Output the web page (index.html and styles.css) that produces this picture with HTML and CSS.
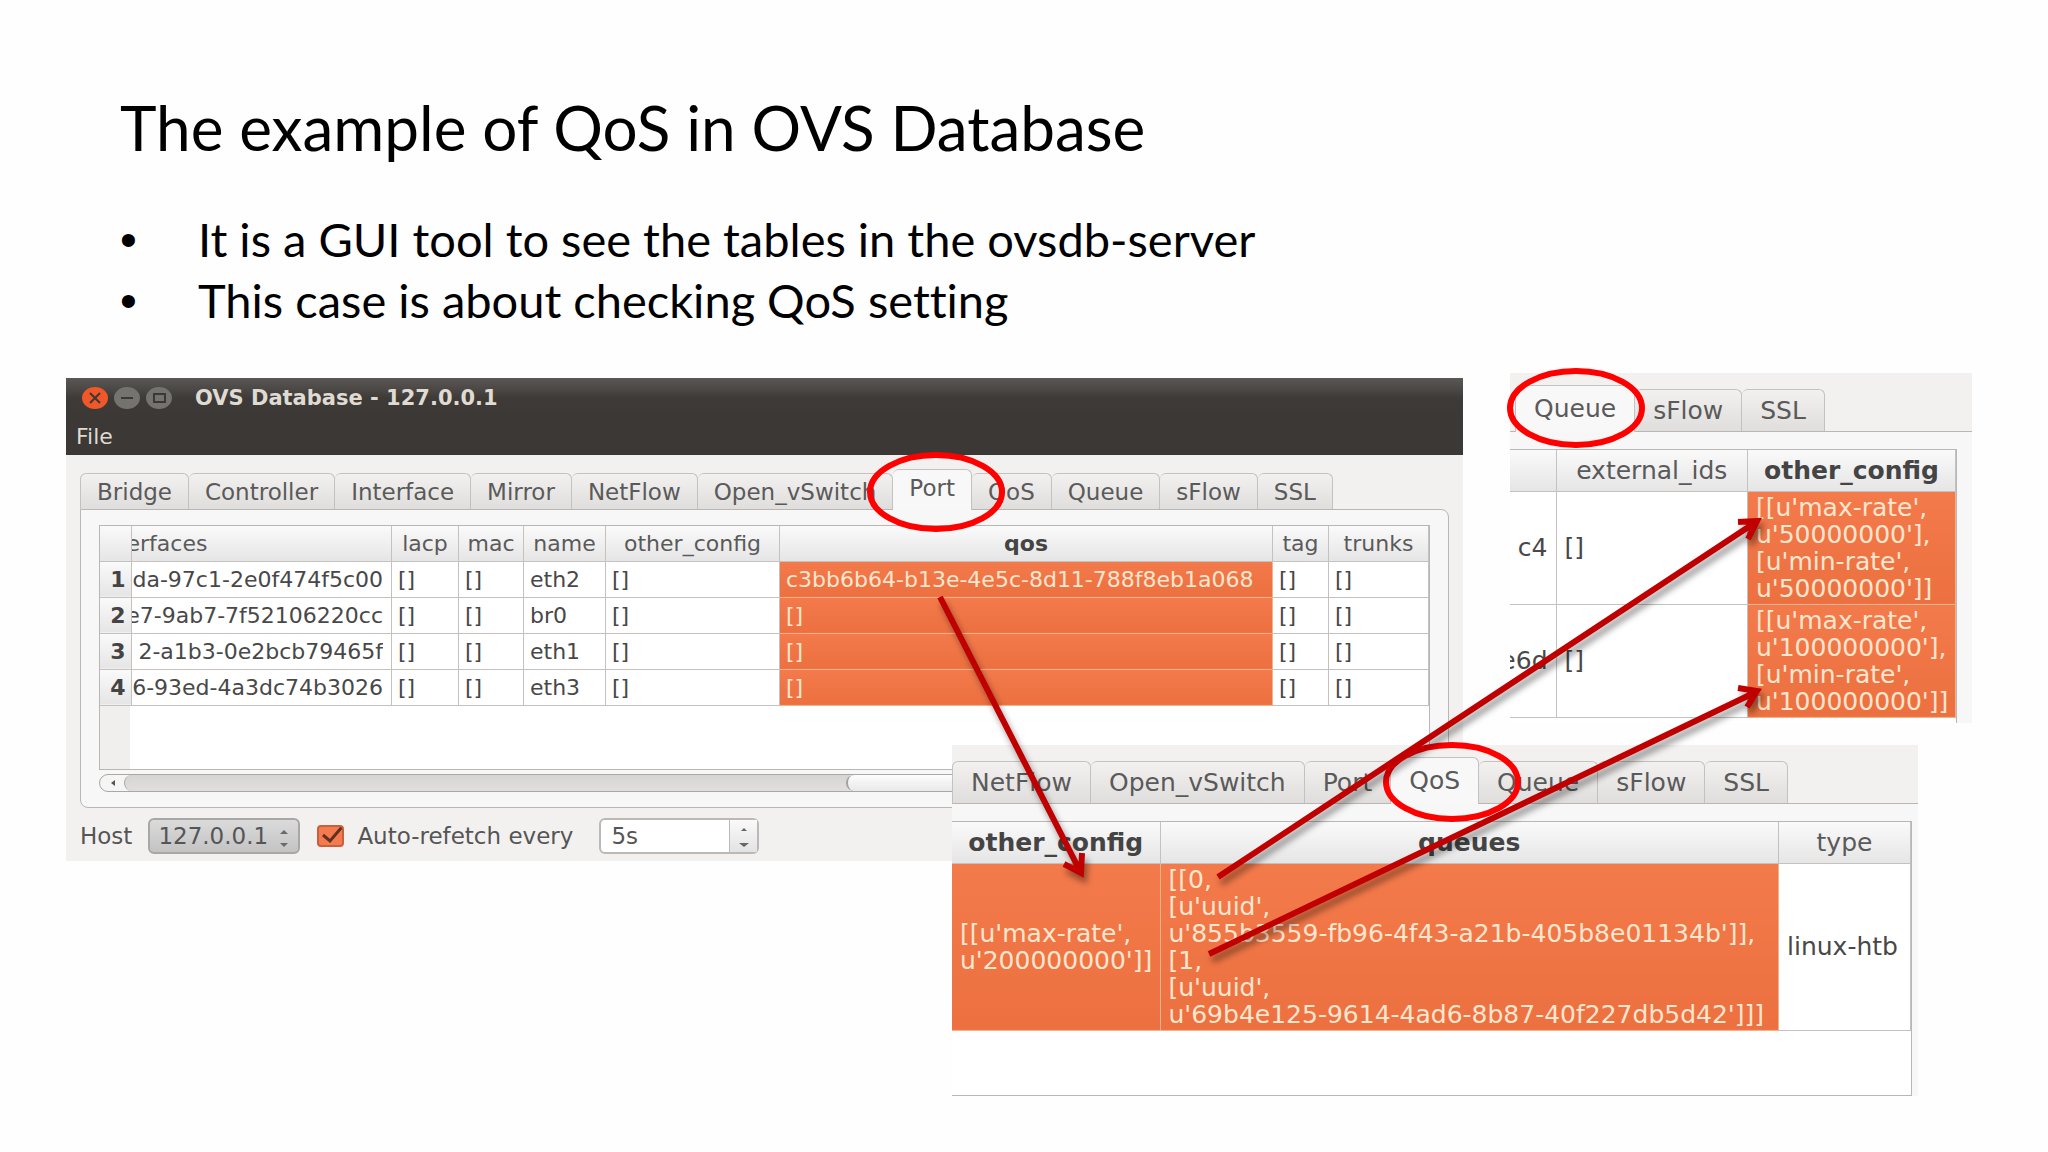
FILE: index.html
```html
<!DOCTYPE html>
<html lang="en">
<head>
    <meta charset="UTF-8">
    <meta name="viewport" content="width=device-width, initial-scale=1.0">
    <title>The example of QoS in OVS Database</title>
    <link rel="stylesheet" href="styles.css">
</head>
<body>

<header class="slide-header">
    <h1>The example of QoS in OVS Database</h1>
    <ul>
        <li>It is a GUI tool to see the tables in the ovsdb-server</li>
        <li>This case is about checking QoS setting</li>
    </ul>
</header>

<main class="canvas">

    <!-- Main window, Port tab -->
    <section class="window port-window">
        <div class="titlebar">
            <button class="dot close" aria-label="Close">
                <svg viewBox="0 0 26 22"><path d="M8 6l10 10M18 6L8 16"/></svg>
            </button>
            <button class="dot" aria-label="Minimize">
                <svg viewBox="0 0 26 22"><path d="M7 11h12"/></svg>
            </button>
            <button class="dot" aria-label="Maximize">
                <svg viewBox="0 0 26 22"><path d="M8 7h11v8H8z"/></svg>
            </button>
            <span class="window-title">OVS Database - 127.0.0.1</span>
        </div>
        <nav class="menubar"><a href="#">File</a></nav>

        <div class="content">
            <div class="tabs">
                <button>Bridge</button>
                <button>Controller</button>
                <button>Interface</button>
                <button>Mirror</button>
                <button>NetFlow</button>
                <button>Open_vSwitch</button>
                <button class="active">Port</button>
                <button>QoS</button>
                <button>Queue</button>
                <button>sFlow</button>
                <button>SSL</button>
            </div>
            <div class="pane">
                <div class="table-area">
                    <table>
                        <colgroup>
                            <col class="col-num"><col><col class="col-lacp"><col class="col-mac"><col class="col-name">
                            <col class="col-other"><col class="col-qos"><col class="col-tag"><col class="col-trunks">
                        </colgroup>
                        <tr>
                            <th></th>
                            <th class="cut-left">erfaces</th>
                            <th>lacp</th>
                            <th>mac</th>
                            <th>name</th>
                            <th>other_config</th>
                            <th class="sorted">qos</th>
                            <th>tag</th>
                            <th>trunks</th>
                        </tr>
                        <tr>
                            <th class="num">1</th>
                            <td class="uuid"><span>da-97c1-2e0f474f5c00</span></td>
                            <td>[]</td><td>[]</td><td>eth2</td><td>[]</td>
                            <td class="selected">c3bb6b64-b13e-4e5c-8d11-788f8eb1a068</td>
                            <td>[]</td><td>[]</td>
                        </tr>
                        <tr>
                            <th class="num">2</th>
                            <td class="uuid"><span>e7-9ab7-7f52106220cc</span></td>
                            <td>[]</td><td>[]</td><td>br0</td><td>[]</td>
                            <td class="selected">[]</td>
                            <td>[]</td><td>[]</td>
                        </tr>
                        <tr>
                            <th class="num">3</th>
                            <td class="uuid"><span>2-a1b3-0e2bcb79465f</span></td>
                            <td>[]</td><td>[]</td><td>eth1</td><td>[]</td>
                            <td class="selected">[]</td>
                            <td>[]</td><td>[]</td>
                        </tr>
                        <tr>
                            <th class="num">4</th>
                            <td class="uuid"><span>6-93ed-4a3dc74b3026</span></td>
                            <td>[]</td><td>[]</td><td>eth3</td><td>[]</td>
                            <td class="selected">[]</td>
                            <td>[]</td><td>[]</td>
                        </tr>
                    </table>
                </div>
                <div class="scrollbar">
                    <svg class="scroll-arrow" viewBox="0 0 24 16"><path d="M15 5v6l-4-3z"/></svg>
                    <div class="groove"></div>
                    <div class="thumb"></div>
                </div>
            </div>
            <form class="footer">
                <label for="host">Host</label>
                <span class="host-box">
                    <select id="host"><option>127.0.0.1</option></select>
                    <svg class="arrows" viewBox="0 0 12 22"><path d="M2 7l4-4 4 4zM2 16l4 4 4-4z"/></svg>
                </span>
                <input type="checkbox" id="refetch" checked>
                <label for="refetch">Auto-refetch every</label>
                <span class="spin-box">
                    <input type="text" aria-label="Refetch interval" value="5s">
                    <span class="spin-buttons">
                        <button type="button" aria-label="Increase"><svg viewBox="0 0 12 6"><path d="M3 5l3-3 3 3z"/></svg></button>
                        <button type="button" aria-label="Decrease"><svg viewBox="0 0 12 6"><path d="M1 1h10L6 5z"/></svg></button>
                    </span>
                </span>
            </form>
        </div>
    </section>

    <!-- Queue tab -->
    <section class="window part queue-window">
        <div class="tabs">
            <button class="active">Queue</button>
            <button>sFlow</button>
            <button>SSL</button>
        </div>
        <div class="table-area">
            <table>
                <colgroup><col class="col-id"><col><col class="col-config"></colgroup>
                <tr>
                    <th></th>
                    <th>external_ids</th>
                    <th class="sorted">other_config</th>
                </tr>
                <tr>
                    <td class="uuid"><span>c4</span></td>
                    <td>[]</td>
                    <td class="selected">[[u'max-rate',<br>u'50000000'],<br>[u'min-rate',<br>u'50000000']]</td>
                </tr>
                <tr>
                    <td class="uuid"><span>e6d</span></td>
                    <td>[]</td>
                    <td class="selected">[[u'max-rate',<br>u'100000000'],<br>[u'min-rate',<br>u'100000000']]</td>
                </tr>
            </table>
        </div>
    </section>

    <!-- QoS tab -->
    <section class="window part qos-window">
        <div class="tabs">
            <button>NetFlow</button>
            <button>Open_vSwitch</button>
            <button>Port</button>
            <button class="active">QoS</button>
            <button>Queue</button>
            <button>sFlow</button>
            <button>SSL</button>
        </div>
        <div class="table-area">
            <table>
                <colgroup><col class="col-config"><col><col class="col-type"></colgroup>
                <tr>
                    <th class="sorted">other_config</th>
                    <th class="sorted">queues</th>
                    <th>type</th>
                </tr>
                <tr>
                    <td class="selected">[[u'max-rate',<br>u'200000000']]</td>
                    <td class="selected">[[0,<br>[u'uuid',<br>u'855b3559-fb96-4f43-a21b-405b8e01134b']],<br>[1,<br>[u'uuid',<br>u'69b4e125-9614-4ad6-8b87-40f227db5d42']]]</td>
                    <td>linux-htb</td>
                </tr>
            </table>
        </div>
    </section>

    <!-- Red circles and arrows over the windows -->
    <svg class="marks" viewBox="0 373 2048 723" preserveAspectRatio="none">
        <g class="circles">
            <ellipse cx="936" cy="492" rx="66" ry="37"/>
            <ellipse cx="1576" cy="408" rx="66" ry="37"/>
            <ellipse cx="1452" cy="782" rx="66" ry="37"/>
        </g>
        <g class="arrow-lines">
            <path d="M940 597L1080 871M1064 864L1081 873L1082 853"/>
            <path d="M1218 877L1756 522M1738 522L1757 521L1748 539"/>
            <path d="M1209 954L1756 692M1738 688L1757 691L1747 707"/>
        </g>
    </svg>
</main>

</body>
</html>
```
FILE: styles.css
```css
body {
    margin: 0;
    background-color: #fefefe;
    font-family: Lato, "Open Sans", sans-serif;
    color: #000;
}
.slide-header {
    padding: 87px 120px 0;
}
h1 {
    margin: 0;
    font-size: 62px;
    font-weight: 400;
    line-height: 80px;
}
ul {
    margin: 42px 0 0;
    padding-left: 78px;
    list-style: none;
    font-size: 47px;
    line-height: 61px;
    font-variant-ligatures: none;
}
li::before {
    content: "•";
    float: left;
    margin-left: -78px;
    font-family: "Liberation Sans", sans-serif;
    font-size: 48px;
}

/* the windows overlap, so they share one grid */
.canvas {
    position: relative;
    display: grid;
    grid-template-columns: 66fr 886fr 511fr 47fr 408fr 54fr 76fr;
    grid-template-rows: 5px 345px 22px 116px 235px;
    margin-top: 42px;
    font-family: "DejaVu Sans", sans-serif;
    font-size: 22px;
    color: #4c4c4c;
}
.window {
    background-color: #f2f1f0;
    min-width: 0;
}
.port-window {
    grid-column: 2 / 4;
    grid-row: 2 / 5;
}
.queue-window {
    grid-column: 5 / 7;
    grid-row: 1 / 3;
}
.qos-window {
    grid-column: 3 / 6;
    grid-row: 4 / 6;
}
.part {
    display: flex;
    flex-direction: column;
    background: linear-gradient(#f2f1f0 59px, #f8f7f7 59px);
    font-size: 25px;
}

button, input, select {
    font: inherit;
    color: inherit;
}

/* title bar */
.titlebar {
    display: flex;
    align-items: center;
    gap: 6px;
    height: 40px;
    padding-left: 16px;
    background: linear-gradient(#5a5855, #3e3a37 50%, #3c3835);
}
.dot {
    width: 26px;
    height: 22px;
    padding: 0;
    border: none;
    border-radius: 50%;
    background-color: #75736d;
}
.dot.close {
    background-color: #f0582a;
}
.dot svg {
    display: block;
    fill: none;
    stroke: #3c3835;
    stroke-width: 2;
}
.window-title {
    margin-left: 17px;
    font-size: 21px;
    font-weight: bold;
    color: #dfdbd2;
}
.menubar {
    height: 37px;
    padding-left: 10px;
    line-height: 38px;
    background-color: #3c3835;
}
.menubar a {
    color: #dfdbd2;
    text-decoration: none;
}

/* tabs */
.content {
    padding: 14px 14px 0;
}
.tabs {
    display: flex;
    align-items: flex-end;
    height: 40px;
}
.tabs button {
    height: 36px;
    padding: 0 16px;
    border: 1px solid #c4c1be;
    border-left-width: 0;
    border-bottom: none;
    border-radius: 6px 6px 0 0;
    background: linear-gradient(#f2f1f0, #e0dedd);
    color: #5a5a5a;
}
.port-window .tabs {
    font-size: 23px;
}
.tabs button:first-child {
    border-left-width: 1px;
}
.tabs button.active {
    position: relative;
    height: 41px;
    margin-bottom: -1px;
    padding-bottom: 4px;
    background: #f9f8f8;
}
.part .tabs {
    height: 46px;
    padding-top: 12px;
    border-bottom: 1px solid #b9b6b3;
}
.part .tabs button {
    height: 42px;
    padding: 0 18px;
}
.part .tabs button.active {
    height: 47px;
    padding-bottom: 2px;
}
.queue-window .tabs {
    padding-left: 5px;
}
.pane {
    padding: 15px 18px;
    border: 1px solid #b9b6b3;
    border-radius: 0 8px 8px 8px;
    background-color: #f8f7f7;
}

/* tables */
.table-area {
    height: 243px;
    border: 1px solid #b9b6b3;
    background: linear-gradient(to right, #f0efee 30px, #fff 30px);
}
.part .table-area {
    flex: 1;
    height: auto;
    margin: 17px 6px 0 0;
    border-left: none;
    background: #fff;
}
.queue-window .table-area {
    margin-right: 15px;
    border-bottom: none;
}
table {
    width: 100%;
    table-layout: fixed;
    border-collapse: collapse;
}
th, td {
    height: 35px;
    box-sizing: border-box;
    padding: 0 6px;
    border: 1px solid #c4c1be;
    border-top: none;
    border-left: none;
    line-height: 27px;
    text-align: left;
    white-space: nowrap;
    overflow: hidden;
}
td {
    height: 36px;
    color: #484848;
}
th {
    background: linear-gradient(#fafafa, #e6e5e6);
    font-weight: 400;
    text-align: center;
    color: #5a5a5a;
}
.part th {
    height: 41px;
}
.part td {
    padding: 2px 8px;
}
th.sorted, th.num {
    font-weight: bold;
    color: #444;
}
th.num {
    padding: 0 5px;
    text-align: right;
}
th.cut-left {
    padding: 0;
    text-align: left;
    text-indent: -6px;
}
td.uuid, .part td.uuid {
    padding: 0 8px 0 0;
}
td.uuid span {
    display: flex;
    justify-content: flex-end;
    overflow: hidden;
}
td.selected {
    border-color: #f3b08c;
    background: linear-gradient(#f37a4b, #ec7040);
    color: #ffe6cf;
}
.col-num { width: 31px; }
.col-lacp { width: 67px; }
.col-mac { width: 65px; }
.col-name { width: 82px; }
.col-other { width: 174px; }
.col-qos { width: 493px; }
.col-tag { width: 56px; }
.col-trunks { width: 100px; }
.col-id { width: 46px; }
.col-config { width: 208px; }
.col-type { width: 132px; }

/* scrollbar */
.scrollbar {
    display: flex;
    height: 16px;
    margin-top: 4px;
    border: 1px solid #aaa7a4;
    border-radius: 9px;
    background-color: #f6f5f5;
}
.scroll-arrow {
    width: 24px;
    fill: #555;
}
.groove {
    flex: 716;
    border-left: 1px solid #aaa7a4;
    border-radius: 9px 0 0 9px;
    background: linear-gradient(#d6d5d3, #e0dfdd);
}
.thumb {
    flex: 574;
    margin-left: -4px;
    border-left: 2px solid #a3a09d;
    border-radius: 9px;
    background: linear-gradient(#fdfdfd, #e9e8ea);
}

/* host and refetch controls */
.footer {
    display: flex;
    align-items: center;
    padding: 10px 0 7px;
    font-size: 23px;
    color: #555;
}
.host-box {
    position: relative;
    margin: 0 17px 0 16px;
}
.host-box select {
    display: block;
    width: 152px;
    height: 36px;
    padding: 0 8px;
    appearance: none;
    border: 2px solid #a9a7a5;
    border-radius: 6px;
    background: linear-gradient(#dcdbdb, #c4c3c4);
}
.arrows {
    position: absolute;
    right: 10px;
    top: 9px;
    width: 12px;
    height: 22px;
    fill: #6a6a6a;
}
.footer input[type="checkbox"] {
    width: 27px;
    height: 22px;
    margin: 0 13px 0 0;
    appearance: none;
    border: 2px solid #c9603c;
    border-radius: 4px;
    background: #f47b4f url("data:image/svg+xml,%3Csvg xmlns='http://www.w3.org/2000/svg' viewBox='0 0 27 22'%3E%3Cpath d='M6 10l7 6L25 2' fill='none' stroke='%23603020' stroke-width='3'/%3E%3C/svg%3E") center / 27px 22px;
}
.spin-box {
    display: flex;
    width: 160px;
    height: 36px;
    box-sizing: border-box;
    margin-left: 26px;
    border: 2px solid #bbb8b5;
    border-radius: 6px;
    background-color: #fff;
}
.spin-box input {
    flex: 1;
    min-width: 0;
    padding: 0 10px;
    border: none;
    background: none;
}
.spin-buttons {
    display: flex;
    flex-direction: column;
    width: 27px;
    border-left: 1px solid #bbb8b5;
    background: linear-gradient(#fafafa, #e4e3e3);
}
.spin-buttons button {
    flex: 1;
    padding: 0;
    border: none;
    background: none;
    line-height: 0;
}
.spin-buttons svg {
    width: 12px;
    height: 6px;
    fill: #666;
}

/* circles and arrows */
.marks {
    position: absolute;
    inset: 0;
    width: 100%;
    height: 100%;
    overflow: visible;
    pointer-events: none;
    fill: none;
}
.circles {
    stroke: #f00;
    stroke-width: 6;
}
.arrow-lines {
    stroke: #c00000;
    stroke-width: 6;
    filter: drop-shadow(3px 6px 3px rgba(0, 0, 0, 0.4));
}
```
